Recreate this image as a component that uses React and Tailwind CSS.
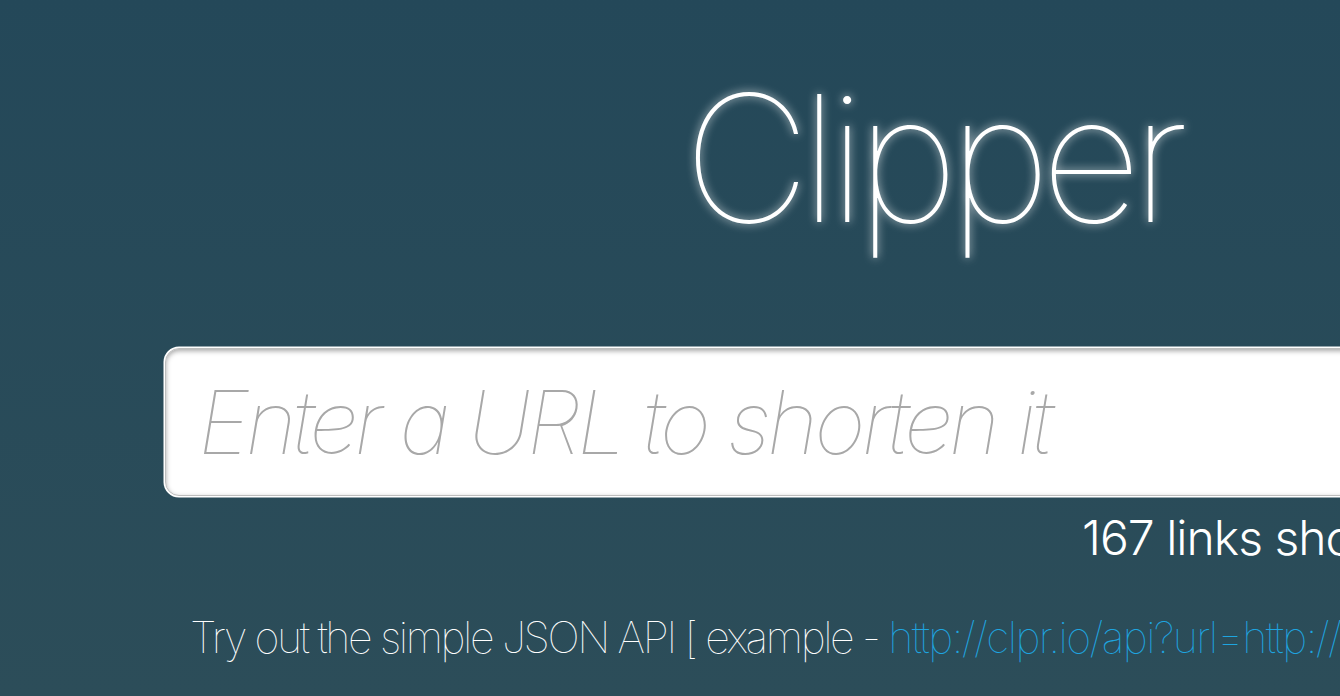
import React from "react";

const FONT = "font-['Helvetica_Neue',Inter,'Liberation_Sans',sans-serif]";

export default function App() {
  return (
    <div
      className={`w-[1340px] h-[696px] overflow-hidden bg-gradient-to-b from-[#244859] to-[#2c4d59] ${FONT}`}
    >
      <div className="ml-[165px] w-[1532px] flex flex-col">
        <h1 className="mt-[54px] text-center text-[176px] leading-[208px] font-thin text-white tracking-[-10px] [text-shadow:0_0_10px_rgba(255,255,255,0.75)]">
          Clipper
        </h1>

        <div className="mt-[86px] h-[148px] rounded-[14px] bg-white border border-[#bdbdbd] shadow-[0_0_0_1.5px_#ffffff,inset_0_2px_5px_rgba(0,0,0,0.35)] flex items-center">
          <input
            type="text"
            placeholder="Enter a URL to shorten it"
            className="w-full bg-transparent outline-none pl-[32px] text-[88px] font-thin italic text-[#555] placeholder:text-[#a8a8a8] tracking-[-4px]"
          />
        </div>

        <p className="mt-[14px] pl-[917px] text-[48px] leading-[56px] font-light text-white whitespace-nowrap tracking-[-1px]">
          167 links shortened so far
        </p>

        <p className="mt-[46px] pl-[25px] text-[43px] leading-[50px] font-thin text-white whitespace-nowrap tracking-[-2.4px]">
          Try out the simple JSON API [ example -{" "}
          <a href="#" className="text-[#1ea5e0] tracking-[-1.6px]">
            http://clpr.io/api?url=http://google.com
          </a>{" "}
          ]
        </p>
      </div>
    </div>
  );
}
